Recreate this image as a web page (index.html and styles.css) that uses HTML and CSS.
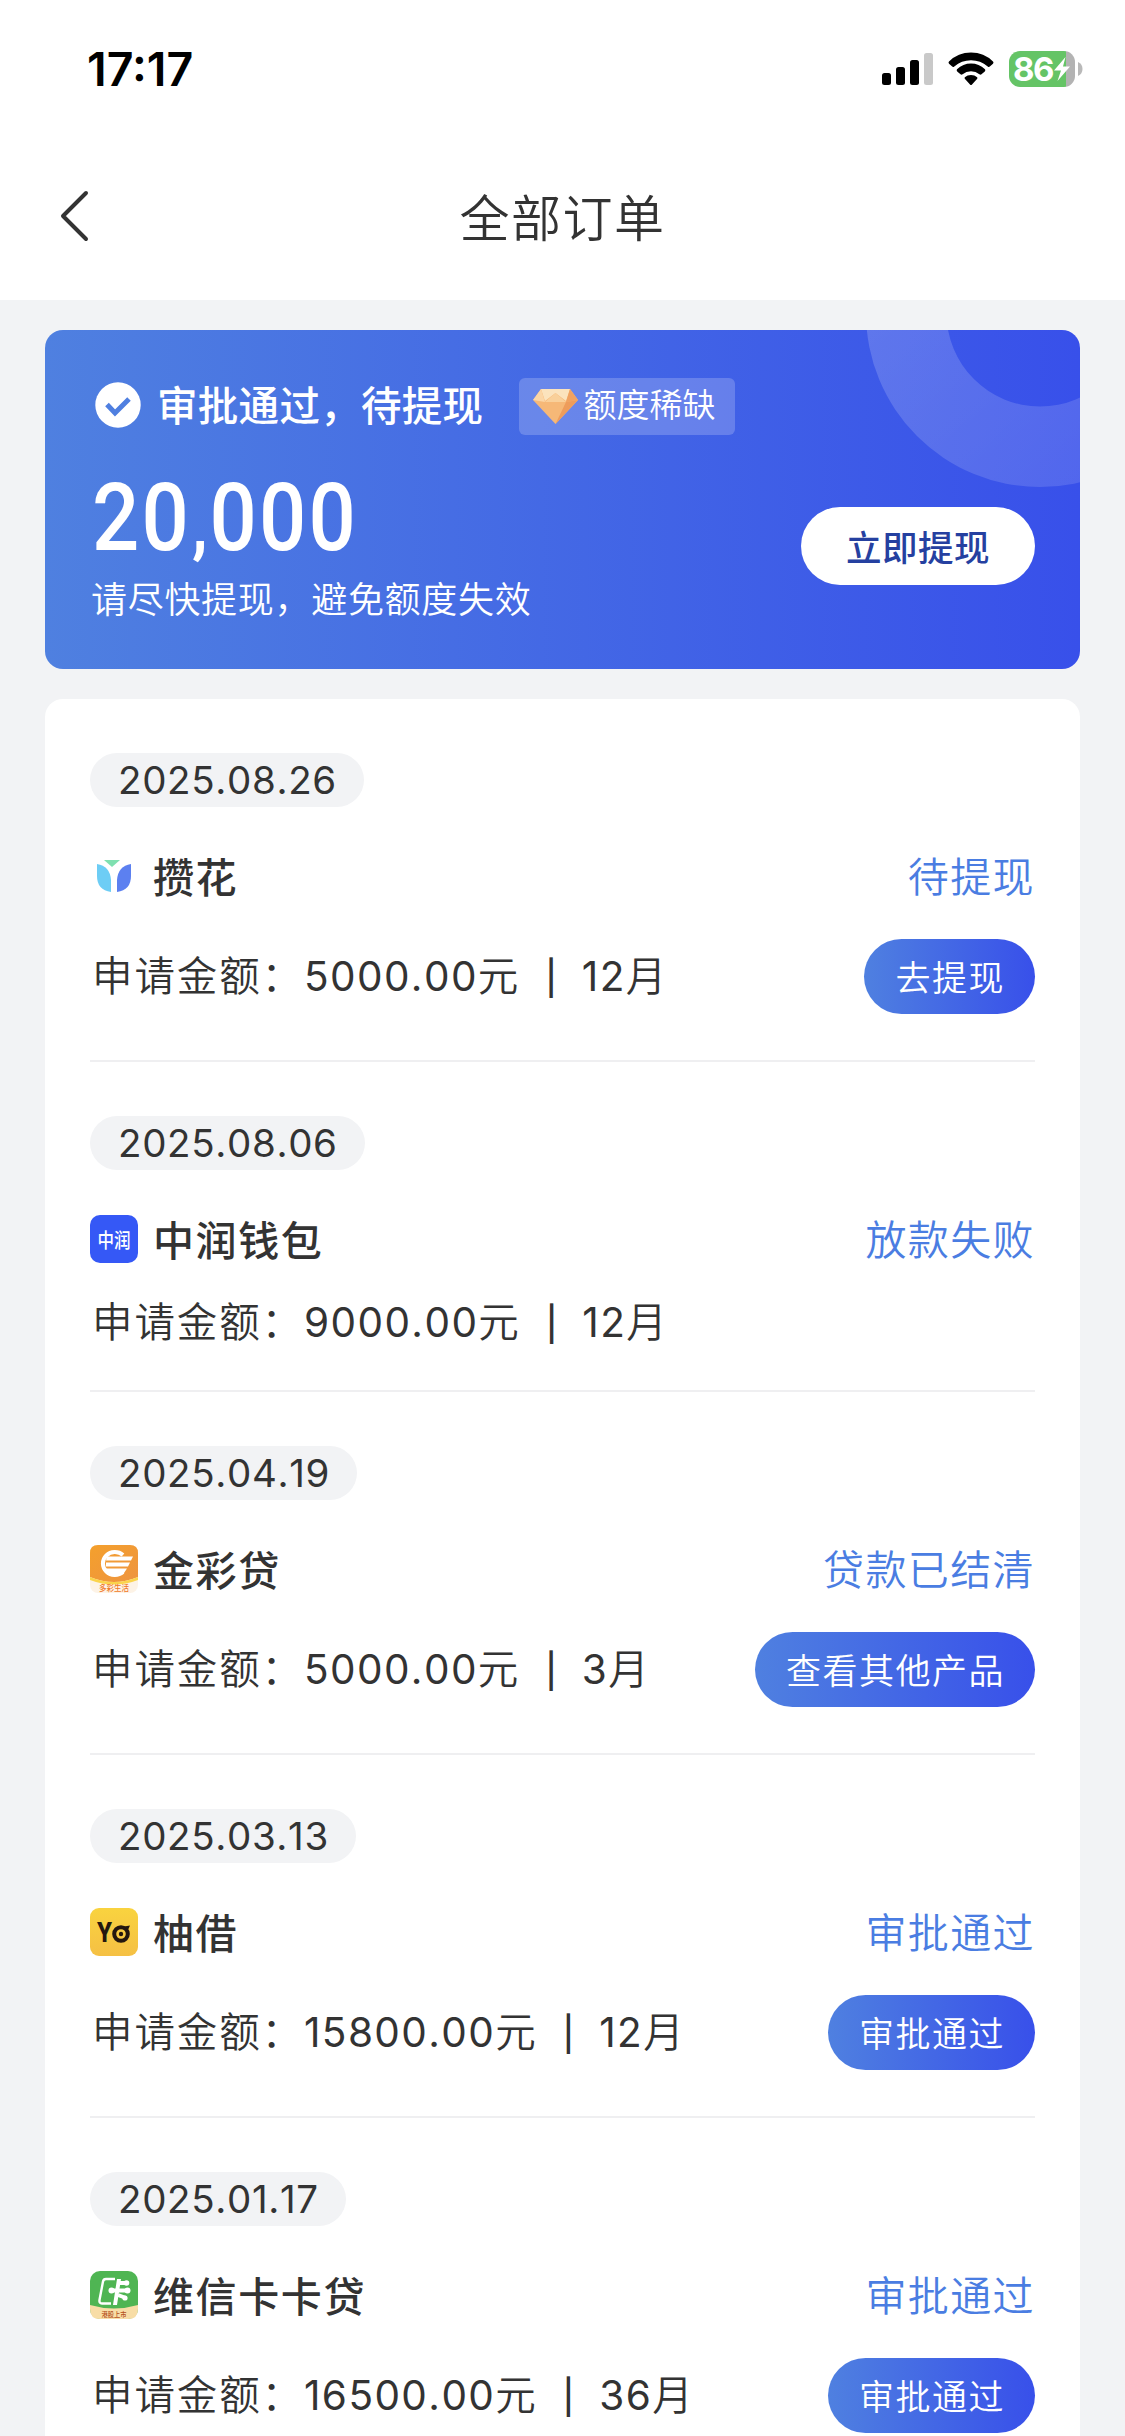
FILE: index.html
```html
<!DOCTYPE html>
<html lang="zh-CN">
<head>
<meta charset="utf-8">
<title>全部订单</title>
<link rel="stylesheet" href="styles.css">
</head>
<body>
<header class="top">
  <div class="statusbar">
    <span class="clock">17:17</span>
    <div class="indicators">
      <svg class="signal" width="51" height="32" viewBox="0 0 51 32"><rect y="20" width="9" height="12" rx="2.5"/><rect x="14" y="14" width="9" height="18" rx="2.5"/><rect x="28" y="7" width="9" height="25" rx="2.5"/><rect x="42" width="9" height="32" rx="2.5" fill="#c9c9c9"/></svg>
      <svg class="wifi" width="46" height="34" viewBox="0 0 46 34"><path d="M1 9.500Q0 10.600 1 11.700L4.200 14.600Q5.200 15.300 6.300 14.400Q13.500 8.300 23 8.300T39.700 14.400Q40.800 15.300 41.800 14.600L45 11.700Q46 10.600 45 9.500Q36 .5 23 .5T1 9.500Z"/><path d="M9 17.300Q8.200 18.400 9.200 19.400L12.500 22.300Q13.500 23 14.600 22.200Q18.200 19.200 23 19.200T31.400 22.200Q32.500 23 33.500 22.300L36.800 19.400Q37.800 18.400 37 17.300Q31 11.600 23 11.600T9 17.300Z"/><path d="M16.800 25.200Q16.200 26.200 17 27L22 32.400Q23 33.400 24 32.400L29 27Q29.800 26.200 29.200 25.200Q26.600 23 23 23T16.800 25.200Z"/></svg>
      <div class="battery">
        <div class="battery-body"><span>86</span><svg width="18" height="26" viewBox="0 0 18 26"><path d="M12.500 1L1 14.500H8L4.500 25L17 10.500H10Z" fill="#fff"/></svg></div>
        <svg width="5" height="14" viewBox="0 0 5 14"><path d="M0 0Q4.500 2 4.500 7T0 14Z" fill="#b9b9b9"/></svg>
      </div>
    </div>
  </div>
  <nav class="navbar">
    <svg class="back" width="32" height="54" viewBox="0 0 32 54"><path d="M28 4L5 27L28 50" fill="none" stroke="#333" stroke-width="4" stroke-linecap="round" stroke-linejoin="round"/></svg>
    <h1>全部订单</h1>
  </nav>
</header>
<main>
  <section class="banner">
    <svg class="ring" width="214" height="157" viewBox="0 0 214 157"><defs><linearGradient id="rg" x1="0" y1="0" x2="1" y2="1"><stop offset="0" stop-color="#fff" stop-opacity=".2"/><stop offset="1" stop-color="#fff" stop-opacity=".11"/></linearGradient></defs><path fill="url(#rg)" fill-rule="evenodd" d="M0-17a174 174 0 0 0 348 0a174 174 0 0 0-348 0zM80.500-17a93.500 93.500 0 0 1 187 0a93.500 93.500 0 0 1-187 0z"/></svg>
    <div class="banner-info">
      <div class="banner-head">
        <svg width="46" height="46" viewBox="0 0 46 46"><circle cx="23" cy="23" r="22.700" fill="#fff"/><path d="M12 22.500L20 31L34 17" fill="none" stroke="#4f7fe0" stroke-width="5"/></svg>
        <strong>审批通过，待提现</strong>
        <span class="tag"><svg width="45" height="35" viewBox="0 0 45 35"><path d="M8 0H37L45 11L22.500 35L0 11Z" fill="#f6b877"/><path d="M8 0H37L33 12L22.500 4L12 12Z" fill="#fbe3bd"/><path d="M8 0L12 13L0 11Z" fill="#fbd6a6"/><path d="M37 0L45 11L33 13Z" fill="#f0a261"/><path d="M12 13L22.500 4L33 13Z" fill="#f9d09a"/><path d="M33 13L45 11L22.500 35Z" fill="#ee9c5b"/></svg><span>额度稀缺</span></span>
      </div>
      <div class="sum">20<span class="comma">,</span>000</div>
      <p>请尽快提现，避免额度失效</p>
    </div>
    <button class="cash">立即提现</button>
  </section>
  <section class="orders">
    <article class="order">
      <time>2025.08.26</time>
      <div class="row"><svg class="logo" viewBox="0 0 48 48"><path d="M14 8H30L22 15Z" fill="#7fe0b0"/><path d="M7 12Q20 14 21 28V40Q7 38 7 24Z" fill="#6dcdf5"/><path d="M41 12Q28 14 27 28V40Q41 38 41 24Z" fill="#5c80f0"/></svg><h2>攒花</h2><span class="state">待提现</span></div>
      <div class="detail"><span>申请金额：<span class="num">5000.00</span>元 <span class="bar">|</span> <span class="num">12</span>月</span><button>去提现</button></div>
    </article>
    <article class="order">
      <time>2025.08.06</time>
      <div class="row"><svg class="logo" viewBox="0 0 48 48"><rect width="48" height="48" rx="10" fill="#3558f6"/><text x="24" y="32.500" text-anchor="middle" textLength="33" lengthAdjust="spacingAndGlyphs" class="logo-text" font-size="20" fill="#fff">中润</text></svg><h2>中润钱包</h2><span class="state">放款失败</span></div>
      <div class="detail"><span>申请金额：<span class="num">9000.00</span>元 <span class="bar">|</span> <span class="num">12</span>月</span></div>
    </article>
    <article class="order">
      <time>2025.04.19</time>
      <div class="row"><svg class="logo" viewBox="0 0 48 48"><defs><linearGradient id="og" x1="0" x2="1" y1="0" y2="1"><stop offset="0" stop-color="#f4a02c"/><stop offset="1" stop-color="#ee9440"/></linearGradient></defs><rect width="48" height="48" rx="8" fill="#fdf3e6"/><path d="M0 8Q0 0 8 0H40Q48 0 48 8V32Q24 42 0 32Z" fill="url(#og)"/><path d="M0 32Q24 42 48 32V35Q24 44 0 35Z" fill="#fbd44c"/><path d="M33 10A12 11.500 0 1 0 33 27" fill="none" stroke="#fff" stroke-width="4"/><path d="M17 11.500H43L41 15.500H16ZM16 17.500H40L38 21.500H16ZM16 23.500H37L34 28H19Z" fill="#fff"/><text x="24" y="46" text-anchor="middle" textLength="30" lengthAdjust="spacingAndGlyphs" class="logo-text" font-size="8" fill="#f07828">多彩生活</text></svg><h2>金彩贷</h2><span class="state">贷款已结清</span></div>
      <div class="detail"><span>申请金额：<span class="num">5000.00</span>元 <span class="bar">|</span> <span class="num">3</span>月</span><button>查看其他产品</button></div>
    </article>
    <article class="order">
      <time>2025.03.13</time>
      <div class="row"><svg class="logo" viewBox="0 0 48 48"><defs><linearGradient id="yg" x1="0" x2="0" y1="0" y2="1"><stop offset="0" stop-color="#f9d33f"/><stop offset="1" stop-color="#f5c044"/></linearGradient></defs><rect width="48" height="48" rx="9" fill="url(#yg)"/><text x="6.500" y="34" class="logo-latin" font-size="27" textLength="16" lengthAdjust="spacingAndGlyphs" fill="#24170f">Y</text><circle cx="31" cy="26" r="6.800" fill="none" stroke="#24170f" stroke-width="4"/><circle cx="31" cy="26" r="2.200" fill="#24170f"/><path d="M34 18.500L40 17.500L38 22Z" fill="#24170f"/></svg><h2>柚借</h2><span class="state">审批通过</span></div>
      <div class="detail"><span>申请金额：<span class="num">15800.00</span>元 <span class="bar">|</span> <span class="num">12</span>月</span><button>审批通过</button></div>
    </article>
    <article class="order">
      <time>2025.01.17</time>
      <div class="row"><svg class="logo" viewBox="0 0 48 48"><rect width="48" height="48" rx="10" fill="#4fb553"/><path d="M0 34Q24 41 48 34V38Q48 48 38 48H10Q0 48 0 38Z" fill="#f8dda6"/><path d="M25 8H16Q13.500 8 13 10.500L9.500 29Q9 32.500 12 32.500H21" fill="none" stroke="#fff" stroke-width="2.400"/><path d="M27 8H31L27 34H23Z" fill="#fff"/><path d="M28 12H37M21 19.500H38M28 24L36 27" fill="none" stroke="#fff" stroke-width="4"/><circle cx="36.500" cy="12" r="2.800" fill="#fff"/><circle cx="21.500" cy="19.500" r="3" fill="#fff"/><circle cx="37.500" cy="19.500" r="3" fill="#fff"/><circle cx="35" cy="27" r="2.600" fill="#fff"/><text x="24" y="46" text-anchor="middle" textLength="25" lengthAdjust="spacingAndGlyphs" class="logo-text" font-size="7" fill="#b5501c">港股上市</text></svg><h2>维信卡卡贷</h2><span class="state">审批通过</span></div>
      <div class="detail"><span>申请金额：<span class="num">16500.00</span>元 <span class="bar">|</span> <span class="num">36</span>月</span><button>审批通过</button></div>
    </article>
  </section>
</main>
</body>
</html>
```
FILE: styles.css
```css
* { box-sizing: border-box; margin: 0; padding: 0; }
body {
  width: 1125px;
  height: 2436px;
  overflow: hidden;
  background: #f2f3f5;
  color: #333;
  font-family: Inter, "Noto Sans CJK SC", sans-serif;
}
svg { display: block; flex: none; }
button { border: 0; font-family: inherit; white-space: nowrap; }
.top { height: 300px; background: #fff; }
.statusbar { display: flex; justify-content: space-between; height: 132px; padding: 51px 42px 0 87px; color: #000; }
.clock { height: 36px; line-height: 36px; font-size: 46.500px; font-weight: 600; }
.indicators { display: flex; }
.signal { margin-top: 2px; }
.wifi { margin: 1px 15px 0; }
.battery { display: flex; align-items: center; gap: 3px; height: 36px; }
.battery-body {
  display: flex;
  align-items: center;
  width: 66px;
  height: 36px;
  padding-left: 4px;
  border-radius: 11px;
  background: linear-gradient(90deg, #65c466 57px, #b3b3b3 57px);
  color: #fff;
  font-size: 33px;
  font-weight: 700;
  letter-spacing: -1.500px;
}
.navbar { display: grid; grid-template-columns: 100px 1fr 100px; align-items: center; height: 168px; }
.back { margin-left: 58px; }
h1 { padding-top: 5px; font-size: 50px; line-height: 72px; font-weight: 350; letter-spacing: 1.5px; text-align: center; }
main { padding: 30px 45px 0; }
.banner {
  position: relative;
  display: flex;
  justify-content: space-between;
  height: 339px;
  padding: 48px 45px 0 50px;
  border-radius: 18px;
  overflow: hidden;
  background: linear-gradient(90deg, #4f80e0, #3850ea);
  color: #fff;
}
.ring { position: absolute; top: 0; right: 0; }
.banner-head { display: flex; align-items: center; height: 57px; }
.banner-head > svg { margin-top: -3px; }
.banner-head strong { margin-left: 16px; font-size: 40.500px; font-weight: 500; line-height: 57px; letter-spacing: .3px; white-space: nowrap; }
.tag {
  display: flex;
  align-items: center;
  gap: 5px;
  width: 216px;
  height: 57px;
  margin-left: 36px;
  padding-left: 14px;
  border-radius: 6px;
  background: rgba(255, 255, 255, .2);
  font-size: 33px;
  line-height: 50px;
  font-weight: 350;
  white-space: nowrap;
}
.tag span { padding-bottom: 3px; }
.sum {
  height: 94px;
  margin: 36px 0 0 -3px;
  font-family: Roboto, sans-serif;
  font-size: 94px;
  line-height: 94px;
  font-weight: 500;
  transform: scaleX(.885);
  transform-origin: left;
  letter-spacing: 2.500px;
}
.comma { display: inline-block; width: 21px; padding-left: 1px; font-size: 72px; font-weight: 700; line-height: 72px; }
.banner p { margin: 8px 0 0 -4px; font-size: 36px; line-height: 54px; font-weight: 350; letter-spacing: .7px; }
.cash { width: 234px; height: 78px; margin-top: 129px; padding-bottom: 2px; border-radius: 39px; background: #fff; color: #2540a0; font-size: 35.500px; font-weight: 500; letter-spacing: .5px; }
.orders { margin-top: 30px; padding: 0 45px; border-radius: 18px 18px 0 0; background: #fff; }
.order { padding: 54px 0 46px; border-bottom: 2px solid #efeff1; }
time {
  display: block;
  width: fit-content;
  height: 54px;
  padding: 0 27px 0 28px;
  border-radius: 27px;
  background: #f2f3f5;
  font-size: 38.500px;
  line-height: 54px;
  font-weight: 370;
  font-kerning: none;
  letter-spacing: .65px;
}
.row { display: flex; align-items: center; height: 48px; margin-top: 45px; }
.logo { width: 48px; height: 48px; overflow: visible; }
.logo-text { font-family: "Noto Sans CJK SC", sans-serif; font-weight: 500; }
.logo-latin { font-family: Inter, sans-serif; font-weight: 800; }
h2 { margin-left: 15px; padding-top: 3px; font-size: 41px; line-height: 48px; font-weight: 500; letter-spacing: 1.600px; }
.state { margin-left: auto; padding-top: 1px; color: #4a7de2; font-size: 41px; line-height: 48px; font-weight: 350; letter-spacing: 1.400px; }
.detail { display: flex; align-items: center; justify-content: space-between; min-height: 42px; margin-top: 39px; padding-left: 2px; font-size: 40.500px; line-height: 42px; font-weight: 350; letter-spacing: 1.900px; white-space: pre; }
.detail > span { margin: -1px 0; }
.num { font-weight: 370; font-kerning: none; letter-spacing: 1.400px; }
.bar { display: inline-block; width: 35px; font-size: 34px; line-height: 36px; text-align: center; letter-spacing: 0; vertical-align: 1px; font-weight: 500; }
.detail button {
  height: 75px;
  padding: 0 30px 3px 31px;
  border-radius: 38px;
  background: linear-gradient(90deg, #4f80e0, #3850ea);
  color: #fff;
  font-size: 35px;
  font-weight: 350;
  letter-spacing: 1.500px;
}
```
